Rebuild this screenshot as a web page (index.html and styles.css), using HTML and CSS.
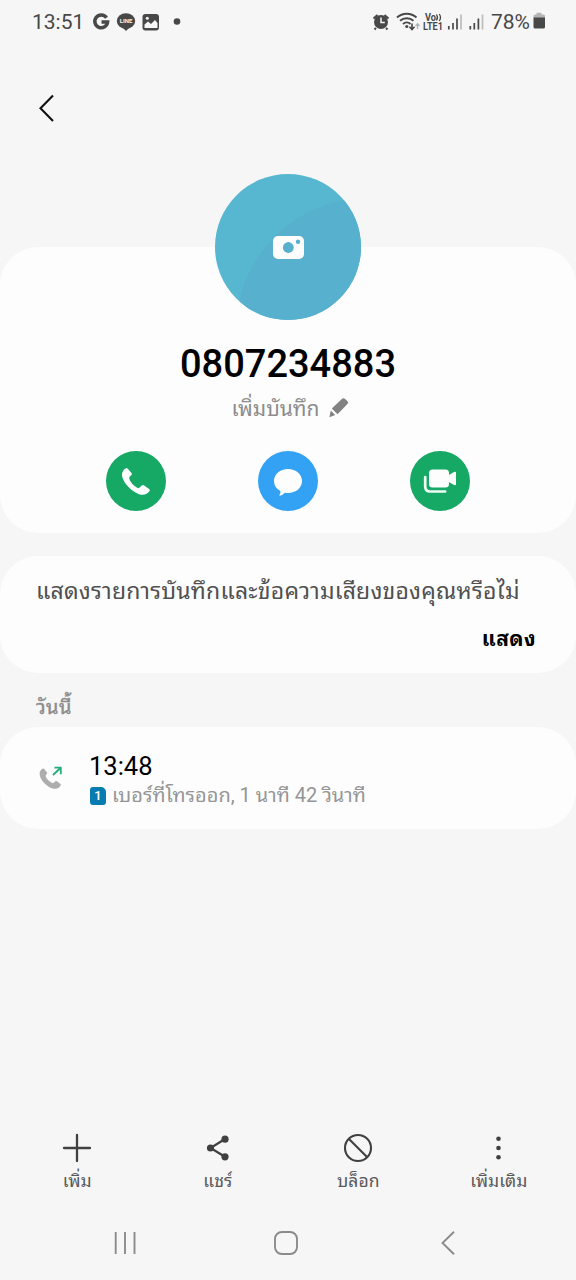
FILE: index.html
```html
<!DOCTYPE html>
<html lang="th">
<head>
    <meta charset="utf-8"/>
    <title>0807234883</title>
    <link rel="stylesheet" href="styles.css">
</head>
<body>
    <div class="status-bar">
        <span class="clock">13:51</span>
        <svg class="status-left" width="90" height="24" viewBox="92 9 90 24">
            <path d="M106.500 16.800A6.400 6.400 0 1 0 107.600 20.900H101.500" fill="none" stroke="#484848" stroke-width="3.500"/>
            <ellipse cx="126" cy="20" rx="9.200" ry="7.800" fill="#484848"/>
            <path d="M121 25l5 5 6-6z" fill="#484848"/>
            <text class="line-text" x="119.800" y="22.300" textLength="12.500" lengthAdjust="spacingAndGlyphs">LINE</text>
            <rect x="142.500" y="13" width="16.500" height="16.500" rx="3" fill="#484848"/>
            <path d="M144.500 26.500v-3l3.500-3 3 2.500 4-4 2.500 3v5h-13z" fill="#f6f6f6"/>
            <circle cx="147.300" cy="17.300" r="1.500" fill="#f6f6f6"/>
            <circle cx="177" cy="20.500" r="3.300" fill="#484848"/>
        </svg>
        <svg class="status-right" width="116" height="24" viewBox="370 9 116 24">
            <!-- alarm -->
            <circle cx="381" cy="21" r="7" fill="#484848"/>
            <path d="M373.500 17.500l4-3.500M388.500 17.500l-4-3.500M376 27l-1.500 1.500M386 27l1.500 1.500" stroke="#484848" stroke-width="2"/>
            <path d="M381 16.500v5h3.800" fill="none" stroke="#f6f6f6" stroke-width="1.500"/>
            <!-- wifi -->
            <g fill="none" stroke="#484848" stroke-width="1.900">
                <path d="M397 16.500a14.500 14.500 0 0 1 19.500 0"/>
                <path d="M400 19.800a10 10 0 0 1 13.500 0"/>
                <path d="M403 23a5.500 5.500 0 0 1 7.500 0"/>
                <path d="M412 22.500v6M409.500 25.800l2.500 2.700 2.500-2.700" stroke-width="1.600"/>
                <path d="M417.500 28v-5M415.500 25l2-2.200 2 2.200" stroke="#b4b4b4" stroke-width="1.300"/>
            </g>
            <circle cx="406.800" cy="25.500" r="1.600" fill="#484848"/>
            <text class="lte-text" x="425" y="20" textLength="11" lengthAdjust="spacingAndGlyphs">Vo</text>
            <path d="M436.500 13.500q2 3 0 6M439.300 13q2.400 3.500 0 7" fill="none" stroke="#484848" stroke-width="1.300"/>
            <text class="lte-text" x="423" y="29" textLength="20" lengthAdjust="spacingAndGlyphs">LTE1</text>
            <!-- signal -->
            <path d="M448.800 25v3.500M453 22v6.500M457 17.500v11M470.300 25v3.500M474.300 22v6.500M478.400 17.500v11" stroke="#484848" stroke-width="1.700"/>
            <path d="M461 13.500v15M482.500 13.500v15" stroke="#bdbdbd" stroke-width="1.700"/>
        </svg>
        <span class="battery-text">78%</span>
        <svg class="battery" width="13" height="18" viewBox="0 0 13 18">
            <path d="M3.500 2.500V.8h5v1.700h2q1.500 0 1.500 1.500v2H.5V4Q.5 2.500 2 2.500z" fill="#b5b5b5"/>
            <path d="M.5 5.500H12V15q0 1.500-1.500 1.500H2Q.5 16.500.5 15z" fill="#484848"/>
        </svg>
    </div>

    <div class="header">
        <svg width="20" height="30" viewBox="0 0 20 30"><path d="M16 2.500L3.500 15.300 16 28" fill="none" stroke="#111" stroke-width="2.100"/></svg>
    </div>

    <div class="card profile">
        <svg class="avatar" width="146" height="146" viewBox="0 0 146 146">
            <defs><clipPath id="circle"><circle cx="73" cy="73" r="73"/></clipPath></defs>
            <g clip-path="url(#circle)">
                <rect width="146" height="146" fill="#57b7d0"/>
                <circle cx="153" cy="156" r="132" fill="#57b0cd"/>
            </g>
            <rect x="58" y="62" width="31" height="23" rx="5" fill="#fdfdfd"/>
            <circle cx="73.300" cy="73.500" r="5.400" fill="#57b0cd"/>
            <circle cx="83" cy="67.800" r="2.200" fill="#57b0cd"/>
        </svg>
        <div class="number">0807234883</div>
        <div class="note">
            <span class="note-text">เพิ่มบันทึก</span>
            <svg width="20" height="20" viewBox="0 0 20 20">
                <path d="M11.500 2.200l2-1.700q1.200-.8 2.300.2l2.700 2.600q1.200 1.200.2 2.300l-1.700 2L8.500 16.200 2.800 10.500z" fill="#828282"/>
                <path d="M1.800 12.500L6.200 17 .4 19.200z" fill="#828282"/>
            </svg>
        </div>
        <div class="actions">
            <div class="action green">
                <svg width="60" height="60" viewBox="0 0 60 60"><path d="M16.500 21q1-3 4-4 .8 0 1.500 1l3.700 4.300q.5 1-.2 1.800-2.700 2-2.300 3.400 1.500 5.500 8.700 9.700 1.500 0 3.900-2.600 1.200-1 2.300-.2l5 3.700q1.200 1 .5 2-2.500 3.700-7 3.700c-9 0-23.500-15-20.100-22.800z" fill="#fdfdfd"/></svg>
            </div>
            <div class="action blue">
                <svg width="60" height="60" viewBox="0 0 60 60"><path d="M30 18c8 0 14 5 14 12s-6 12-14 12q-1.800 0-3.200-.3Q24 44.500 21.800 44.800q-1 0-.2-1 1.200-1.500.8-3.800Q16 36.500 16 30c0-7 6-12 14-12z" fill="#fdfdfd"/></svg>
            </div>
            <div class="action green">
                <svg width="60" height="60" viewBox="0 0 60 60">
                    <rect x="19" y="18.500" width="20" height="18" rx="3.500" fill="#fdfdfd"/>
                    <path d="M38 24.500l6-3.500q2-.8 2 .8v11.500q0 1.500-2 .7l-6-3.500z" fill="#fdfdfd"/>
                    <path d="M15.200 26v9.500q0 5 5 5h15" fill="none" stroke="#effbf4" stroke-width="2.700" stroke-linecap="round"/>
                </svg>
            </div>
        </div>
    </div>

    <div class="card prompt">
        <div class="prompt-text">แสดงรายการบันทึกและข้อความเสียงของคุณหรือไม่</div>
        <div class="prompt-button">แสดง</div>
    </div>

    <div class="date">วันนี้</div>

    <div class="card call">
        <svg class="call-icon" width="24" height="24" viewBox="0 0 24 24">
            <path d="M1 5.500Q2 3 4 2.500q1 0 1.700 1L8 6.500q.5 1-.2 1.600-1.500 1.300-1 2.600 1.500 3.800 6.700 6.500 1.200 0 2.500-1.700 1-.8 2-.2l3.200 2.500q1 .8.4 1.800-2 3.400-5.500 3.200C9 22.800-1.500 12.500 1 5.500z" fill="#adadad"/>
            <path d="M14 9l7.500-7M15.500 1.700h6.300v6.500" fill="none" stroke="#25ac78" stroke-width="1.800"/>
        </svg>
        <div class="call-info">
            <div class="call-time">13:48</div>
            <div class="call-detail">
                <span class="sim">1</span>
                <span class="detail-text">เบอร์ที่โทรออก, 1 นาที 42 วินาที</span>
            </div>
        </div>
    </div>

    <div class="toolbar">
        <div class="tool">
            <svg width="30" height="30" viewBox="0 0 30 30"><path d="M15 2v26M2 15h26" stroke="#404040" stroke-width="2.300" stroke-linecap="round"/></svg>
            <span>เพิ่ม</span>
        </div>
        <div class="tool">
            <svg width="30" height="30" viewBox="0 0 30 30">
                <path d="M22 6L7.500 15 22 23.800" fill="none" stroke="#404040" stroke-width="2.200"/>
                <g fill="#404040"><circle cx="22" cy="6.200" r="3.600"/><circle cx="7.500" cy="15" r="3.600"/><circle cx="22" cy="23.800" r="3.600"/></g>
            </svg>
            <span>แชร์</span>
        </div>
        <div class="tool">
            <svg width="30" height="30" viewBox="0 0 30 30"><circle cx="15" cy="15" r="13" fill="none" stroke="#404040" stroke-width="2.100"/><path d="M6 6l18 18" stroke="#404040" stroke-width="2.100"/></svg>
            <span>บล็อก</span>
        </div>
        <div class="tool">
            <svg width="30" height="30" viewBox="0 0 30 30"><g fill="#404040"><circle cx="14.500" cy="5.700" r="2.300"/><circle cx="14.500" cy="15" r="2.300"/><circle cx="14.500" cy="24.300" r="2.300"/></g></svg>
            <span>เพิ่มเติม</span>
        </div>
    </div>

    <div class="nav">
        <svg width="24" height="26" viewBox="0 0 24 26"><path d="M2.700 2v22M12 2v22M21.500 2v22" stroke="#8b8b8b" stroke-width="1.900"/></svg>
        <svg class="home" width="26" height="26" viewBox="0 0 26 26"><rect x="2" y="2" width="22" height="22" rx="6.800" fill="none" stroke="#8b8b8b" stroke-width="1.900"/></svg>
        <svg width="18" height="26" viewBox="0 0 18 26"><path d="M15 1.700L3.500 13 15 24.300" fill="none" stroke="#8b8b8b" stroke-width="1.900"/></svg>
    </div>
</body>
</html>
```
FILE: styles.css
```css
* {
    box-sizing: border-box;
}
body {
    margin: 0;
    width: 576px;
    height: 1280px;
    display: flex;
    flex-direction: column;
    overflow: hidden;
    background: #f6f6f6;
    font-family: Roboto, "Noto Sans Thai Looped", "Noto Looped Thai", Loma, Garuda, "Noto Sans Thai", "Noto Sans", sans-serif;
    color: #000;
}
svg {
    display: block;
    flex: none;
}
span, .prompt-text, .date {
    white-space: nowrap;
}
.status-bar {
    height: 43px;
    padding: 0 30px 0 32px;
    display: flex;
    align-items: center;
    font-size: 21px;
    color: #484848;
}
.clock {
    width: 60px;
}
.status-right {
    margin-left: 188px;
}
.battery-text {
    width: 47px;
    padding-left: 5px;
}
.battery {
    margin-top: -2px;
}
.line-text {
    font: bold 6px Roboto, sans-serif;
    fill: #f6f6f6;
}
.lte-text {
    font: bold 10px Roboto, sans-serif;
    fill: #484848;
}
.header {
    height: 204px;
    padding: 50px 0 0 37px;
}
.card {
    background: #fdfdfd;
    border-radius: 38px;
}
.profile {
    height: 286px;
    display: flex;
    flex-direction: column;
    align-items: center;
}
.avatar {
    margin-top: -73px;
}
.number {
    height: 50px;
    margin-top: 19px;
    line-height: 50px;
    font-size: 38px;
    font-weight: 500;
}
.note {
    height: 30px;
    margin-top: 4px;
    padding-left: 4px;
    display: flex;
    align-items: center;
    gap: 9px;
}
.note-text {
    margin-top: 2px;
    font-size: 21px;
    line-height: 30px;
    color: #8c8c8c;
}
.actions {
    margin: 28px 1px 0 0;
    display: flex;
    gap: 92px;
}
.action {
    width: 60px;
    height: 60px;
    border-radius: 50%;
}
.green {
    background: #16a865;
}
.blue {
    background: #33a2f4;
}
.prompt {
    height: 117px;
    margin-top: 23px;
    padding: 20px 40px 0 36px;
}
.prompt-text {
    font-size: 23px;
    line-height: 32px;
    letter-spacing: 0.2px;
    color: #505050;
}
.prompt-button {
    margin-top: 16px;
    font-size: 21px;
    line-height: 30px;
    font-weight: bold;
    letter-spacing: 0.4px;
    text-align: right;
}
.date {
    height: 54px;
    padding: 20px 0 0 36px;
    font-size: 20px;
    line-height: 28px;
    letter-spacing: 0.5px;
    color: #8c8c8c;
    -webkit-text-stroke: 0.4px #8c8c8c;
}
.call {
    height: 102px;
    padding: 23px 0 0 39px;
    display: flex;
}
.call-icon {
    margin-top: 16px;
}
.call-info {
    margin-left: 26px;
}
.call-time {
    font-size: 25.500px;
    line-height: 32px;
}
.call-detail {
    height: 28px;
    display: flex;
    align-items: center;
    gap: 6px;
    font-size: 20px;
    color: #959595;
}
.detail-text {
    line-height: 28px;
    margin-top: -2px;
}
.sim {
    width: 16px;
    height: 18px;
    margin-left: 1px;
    background: #087bb0;
    border-radius: 3px 5px 3px 3px;
    color: #fff;
    font-size: 13px;
    font-weight: 500;
    line-height: 18px;
    text-align: center;
}
.toolbar {
    margin-top: auto;
    height: 76px;
    padding: 3px 7px 0;
    display: flex;
}
.tool {
    flex: 1;
    display: flex;
    flex-direction: column;
    align-items: center;
    font-size: 17.500px;
    line-height: 26px;
    color: #5a5a5a;
}
.tool span {
    margin-top: 5px;
}
.nav {
    height: 74px;
    padding: 24px 119px 0 113px;
    display: flex;
}
.home {
    margin: 0 140px 0 136px;
}
```
